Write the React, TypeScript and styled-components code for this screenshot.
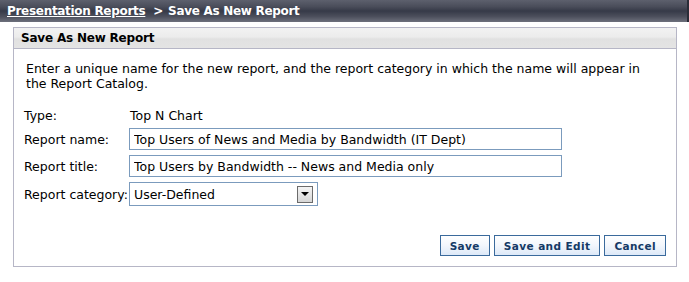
import styled, { createGlobalStyle } from "styled-components";

const GlobalStyle = createGlobalStyle`
  body {
    margin: 0;
    background: #ffffff;
    font-family: "DejaVu Sans", Verdana, sans-serif;
    font-size: 12.5px;
    color: #000000;
  }
`;

const Page = styled.div`
  width: 689px;
  height: 282px;
  overflow: hidden;
`;

const TitleBar = styled.div`
  height: 22px;
  display: flex;
  align-items: center;
  padding-left: 7px;
  background: linear-gradient(
    to bottom,
    #5d606d 0%,
    #4a4d5a 30%,
    #363a48 50%,
    #4c4f5c 75%,
    #6d707c 100%
  );
  border-right: 2px solid #2a2d38;
  color: #ffffff;
  font-weight: bold;
  font-size: 12px;
  letter-spacing: -0.3px;
  white-space: nowrap;
`;

const Crumb = styled.a`
  color: #ffffff;
  text-decoration: underline;
  cursor: pointer;
`;

const Sep = styled.span`
  margin: 0 5px 0 8px;
`;

const Panel = styled.div`
  margin: 5px 12px 0 13px;
  border: 1px solid #b6b6c6;
  height: 238px;
  display: flex;
  flex-direction: column;
`;

const PanelHeader = styled.div`
  height: 20px;
  display: flex;
  align-items: center;
  padding-left: 7px;
  background: linear-gradient(to bottom, #f2f2f2 0%, #ececec 45%, #e1e1e1 55%, #e4e4e4 100%);
  border-bottom: 1px solid #b6b6c6;
  font-weight: bold;
  font-size: 12px;
  letter-spacing: -0.2px;
`;

const Body = styled.div`
  flex: 1;
  display: flex;
  flex-direction: column;
  padding: 12px 10px 10px 10px;
`;

const Intro = styled.p`
  margin: 0 0 0 2px;
  line-height: 15px;
`;

const Form = styled.div`
  margin-top: 17px;
  display: grid;
  grid-template-columns: 105px auto;
  row-gap: 5px;
  align-items: center;
`;

const Label = styled.div`
  white-space: nowrap;
`;

const Value = styled.div`
  padding-left: 1px;
  height: 14px;
  display: flex;
  align-items: center;
`;

const TextInput = styled.input`
  width: 433px;
  height: 22px;
  box-sizing: border-box;
  border: 1px solid #7b9bbd;
  padding: 0 4px;
  font-family: inherit;
  font-size: 12.5px;
  color: #000;
  background: #fff;
  outline: none;
`;

const Select = styled.div`
  width: 189px;
  height: 24px;
  box-sizing: border-box;
  border: 1px solid #7b9bbd;
  display: flex;
  align-items: center;
  justify-content: space-between;
  padding: 0 4px 0 4px;
  background: #fff;
`;

const DropButton = styled.div`
  width: 16px;
  height: 17px;
  box-sizing: border-box;
  border: 1px solid #6b6b6b;
  background: linear-gradient(to bottom, #f4f4f4, #d6d6d6);
  display: flex;
  align-items: center;
  justify-content: center;

  & svg {
    display: block;
  }
`;

const Actions = styled.div`
  margin-top: auto;
  display: flex;
  justify-content: flex-end;
  gap: 4px;
`;

const Button = styled.button`
  height: 21px;
  box-sizing: border-box;
  padding: 0 9px;
  border: 1px solid #3a6a9c;
  background: linear-gradient(to bottom, #ffffff 0%, #f2f6fc 50%, #dde9f8 100%);
  color: #153a66;
  font-family: inherit;
  font-weight: bold;
  font-size: 10.5px;
  letter-spacing: 0.4px;
  cursor: pointer;
`;

export default function App() {
  return (
    <Page>
      <GlobalStyle />
      <TitleBar>
        <Crumb>Presentation Reports</Crumb>
        <Sep>&gt;</Sep>
        <span>Save As New Report</span>
      </TitleBar>
      <Panel>
        <PanelHeader>Save As New Report</PanelHeader>
        <Body>
          <Intro>
            Enter a unique name for the new report, and the report category in which the name will appear in
            <br />
            the Report Catalog.
          </Intro>
          <Form>
            <Label>Type:</Label>
            <Value>Top N Chart</Value>
            <Label>Report name:</Label>
            <TextInput defaultValue="Top Users of News and Media by Bandwidth (IT Dept)" />
            <Label>Report title:</Label>
            <TextInput defaultValue="Top Users by Bandwidth -- News and Media only" />
            <Label>Report category:</Label>
            <Select>
              <span>User-Defined</span>
              <DropButton>
                <svg width="8" height="4" viewBox="0 0 8 4">
                  <path d="M0 0 H8 L4 4 Z" fill="#000" />
                </svg>
              </DropButton>
            </Select>
          </Form>
          <Actions>
            <Button>Save</Button>
            <Button>Save and Edit</Button>
            <Button>Cancel</Button>
          </Actions>
        </Body>
      </Panel>
    </Page>
  );
}
